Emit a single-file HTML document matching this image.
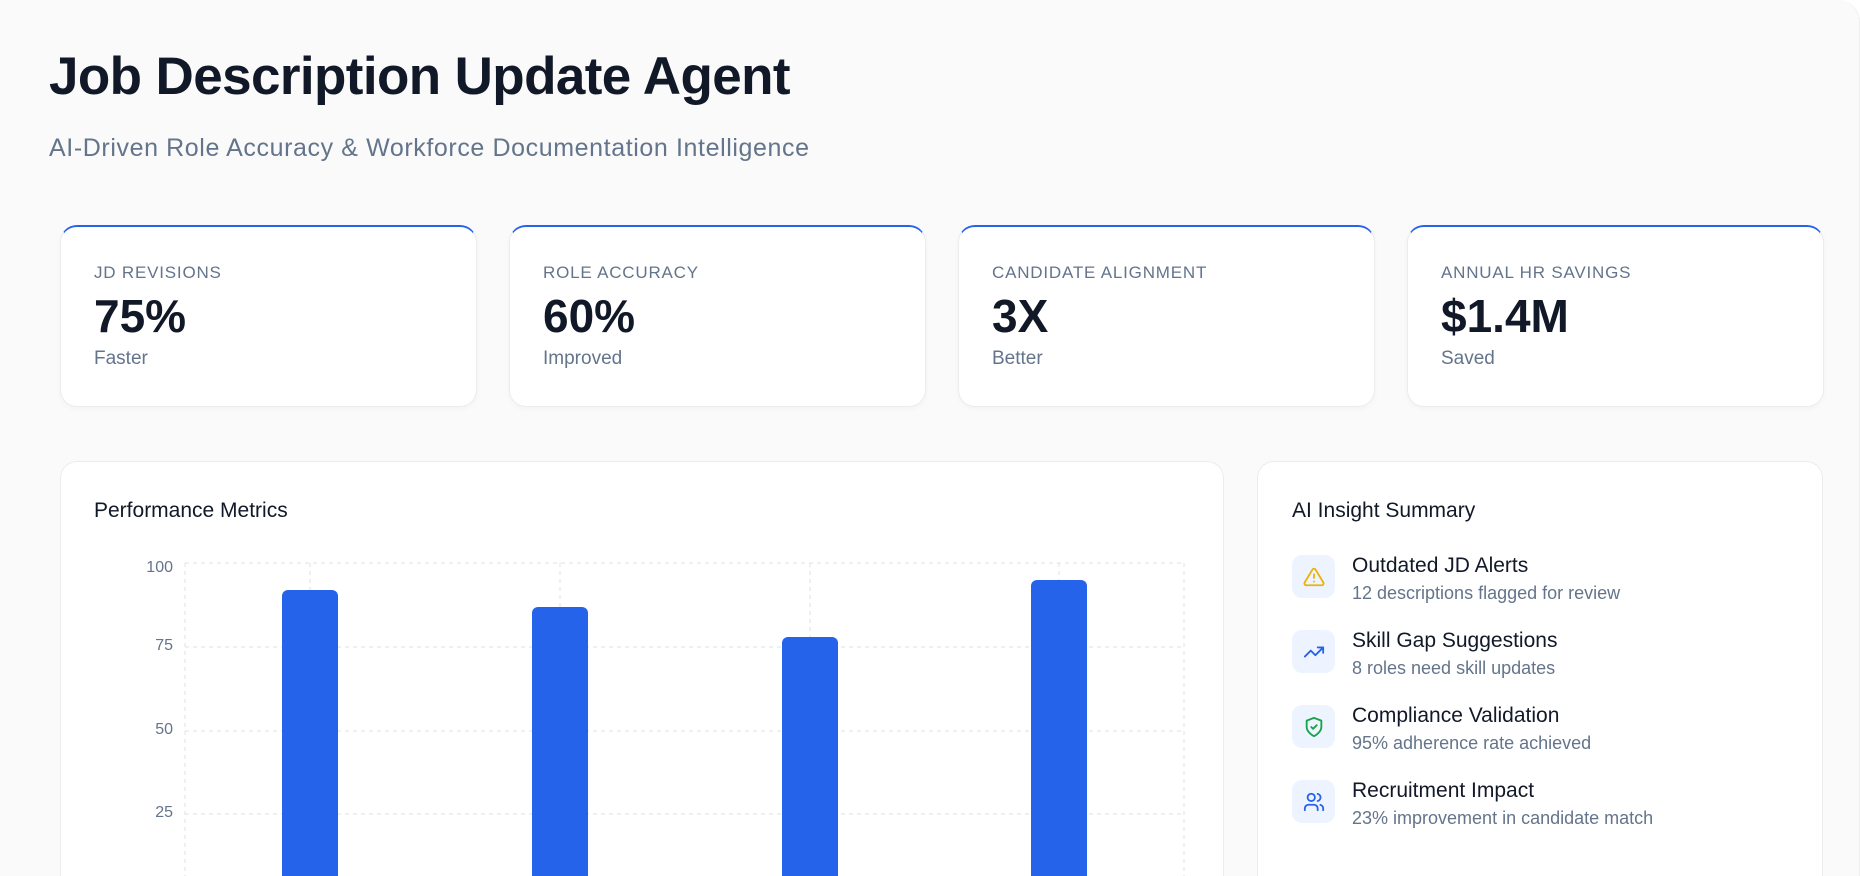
<!DOCTYPE html>
<html><head><meta charset="utf-8"><style>
*{box-sizing:border-box;margin:0;padding:0}
html,body{width:1860px;height:876px;overflow:hidden}
body{background:#fff;font-family:"Liberation Sans",sans-serif;color:#111827;position:relative}
.page{position:absolute;left:0;top:0;width:1860px;height:876px;overflow:hidden;background:#fafafa;border-radius:0 22px 0 0;border-right:1px solid #eee}
h1{position:absolute;left:49px;top:46px;font-size:53px;font-weight:700;letter-spacing:-0.6px;color:#111827}
.sub{position:absolute;left:49px;top:134px;font-size:25px;letter-spacing:0.6px;color:#64748b}
.card{position:absolute;top:225px;width:417px;height:182px;background:#fff;border-radius:17px;border:1px solid #ececec;border-top:2px solid #2563eb;box-shadow:0 2px 6px rgba(0,0,0,.03)}
.card .l{position:absolute;left:33px;top:36px;font-size:17px;letter-spacing:.8px;color:#64748b}
.card .v{position:absolute;left:33px;top:62px;font-size:46px;font-weight:700;color:#111827}
.card .s{position:absolute;left:33px;top:121px;font-size:19px;color:#64748b}
.panel{position:absolute;top:461px;height:415px;background:#fff;border:1px solid #ececec;border-bottom:none;border-radius:17px 17px 0 0}
.pt{position:absolute;left:33px;top:37px;font-size:21px;color:#111827}
.yl{position:absolute;width:40px;text-align:right;left:133px;font-size:16px;color:#64748b}
.bar{position:absolute;width:56px;background:#2563eb;border-radius:6px 6px 0 0;bottom:0}
.it{position:absolute;left:1292px}
.ic{position:absolute;left:0;top:0;width:43px;height:43px;border-radius:10px;background:#eef4ff;display:flex;align-items:center;justify-content:center}
.it .t{position:absolute;left:60px;top:-1px;font-size:21px;white-space:nowrap;color:#111827}
.it .d{position:absolute;left:60px;top:28px;font-size:18px;white-space:nowrap;color:#64748b}
</style></head><body><div class="page">
<h1>Job Description Update Agent</h1>
<div class="sub">AI-Driven Role Accuracy &amp; Workforce Documentation Intelligence</div>
<div class="card" style="left:60px"><div class="l">JD REVISIONS</div><div class="v">75%</div><div class="s">Faster</div></div>
<div class="card" style="left:509px"><div class="l">ROLE ACCURACY</div><div class="v">60%</div><div class="s">Improved</div></div>
<div class="card" style="left:958px"><div class="l">CANDIDATE ALIGNMENT</div><div class="v">3X</div><div class="s">Better</div></div>
<div class="card" style="left:1407px"><div class="l">ANNUAL HR SAVINGS</div><div class="v">$1.4M</div><div class="s">Saved</div></div>

<div class="panel" style="left:60px;width:1164px"><div class="pt">Performance Metrics</div></div>
<svg style="position:absolute;left:0;top:0" width="1860" height="876">
<g stroke="#e5e7eb" stroke-dasharray="4 4" stroke-width="1.3" fill="none">
<line x1="185" y1="563" x2="1184" y2="563"/><line x1="185" y1="647" x2="1184" y2="647"/><line x1="185" y1="731" x2="1184" y2="731"/><line x1="185" y1="814" x2="1184" y2="814"/>
<line x1="185" y1="563" x2="185" y2="876"/><line x1="1184" y1="563" x2="1184" y2="876"/>
<line x1="310" y1="563" x2="310" y2="876"/><line x1="560" y1="563" x2="560" y2="876"/><line x1="810" y1="563" x2="810" y2="876"/><line x1="1059" y1="563" x2="1059" y2="876"/>
</g></svg>
<div class="yl" style="top:559px">100</div><div class="yl" style="top:637px">75</div><div class="yl" style="top:721px">50</div><div class="yl" style="top:804px">25</div>
<div class="bar" style="left:282px;top:590px"></div>
<div class="bar" style="left:532px;top:607px"></div>
<div class="bar" style="left:782px;top:637px"></div>
<div class="bar" style="left:1031px;top:580px"></div>

<div class="panel" style="left:1257px;width:566px"><div class="pt" style="left:34px">AI Insight Summary</div></div>
<div class="it" style="top:555px"><div class="ic"><svg width="22" height="22" viewBox="0 0 24 24" fill="none" stroke="#eab308" stroke-width="2" stroke-linecap="round" stroke-linejoin="round"><path d="M10.3 3.9L1.8 18a2 2 0 0 0 1.7 3h17a2 2 0 0 0 1.7-3L13.7 3.9a2 2 0 0 0-3.4 0z"/><path d="M12 9v4M12 17h.01"/></svg></div><div class="t">Outdated JD Alerts</div><div class="d">12 descriptions flagged for review</div></div>
<div class="it" style="top:630px"><div class="ic"><svg width="22" height="22" viewBox="0 0 24 24" fill="none" stroke="#2563eb" stroke-width="2" stroke-linecap="round" stroke-linejoin="round"><path d="M22 7l-8.5 8.5-5-5L2 17"/><path d="M16 7h6v6"/></svg></div><div class="t">Skill Gap Suggestions</div><div class="d">8 roles need skill updates</div></div>
<div class="it" style="top:705px"><div class="ic"><svg width="22" height="22" viewBox="0 0 24 24" fill="none" stroke="#16a34a" stroke-width="2" stroke-linecap="round" stroke-linejoin="round"><path d="M12 22s8-4 8-10V5l-8-3-8 3v7c0 6 8 10 8 10z"/><path d="M9 12l2 2 4-4"/></svg></div><div class="t">Compliance Validation</div><div class="d">95% adherence rate achieved</div></div>
<div class="it" style="top:780px"><div class="ic"><svg width="22" height="22" viewBox="0 0 24 24" fill="none" stroke="#2563eb" stroke-width="2" stroke-linecap="round" stroke-linejoin="round"><path d="M16 21v-2a4 4 0 0 0-4-4H6a4 4 0 0 0-4 4v2"/><circle cx="9" cy="7" r="4"/><path d="M22 21v-2a4 4 0 0 0-3-3.9M16 3.1a4 4 0 0 1 0 7.8"/></svg></div><div class="t">Recruitment Impact</div><div class="d">23% improvement in candidate match</div></div>
</div></body></html>
